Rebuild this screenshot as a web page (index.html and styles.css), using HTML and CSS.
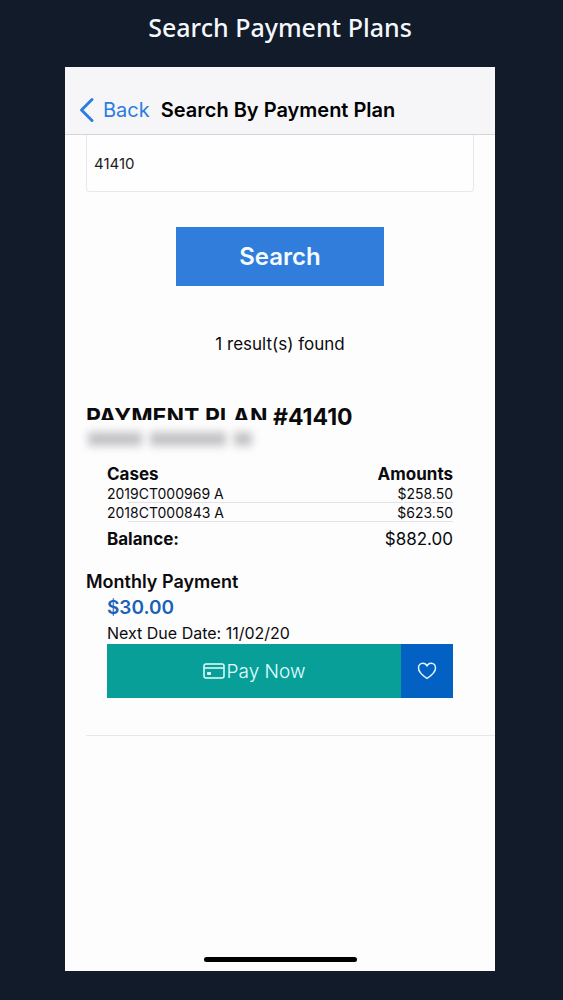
FILE: index.html
```html
<!DOCTYPE html>
<html lang="en">
  <head>
    <meta charset="utf-8">
    <meta name="viewport" content="width=device-width, initial-scale=1">
    <title>Search Payment Plans</title>
    <link rel="stylesheet" href="styles.css">
  </head>
  <body>
    <h1 class="caption">Search Payment Plans</h1>
    <main class="phone">
      <header class="navbar">
        <a class="back" href="#">
          <svg class="chevron" viewBox="0 0 16 26" aria-hidden="true"><path d="M13 2.500 2.500 13 13 23.500"/></svg>
          Back
        </a>
        <h2 class="navbar-title">Search By Payment Plan</h2>
      </header>
      <form class="search">
        <input class="input" type="text" id="plan" name="plan" value="41410" aria-label="Payment plan number">
        <button class="search-button" type="button">Search</button>
      </form>
      <p class="results">1 result(s) found</p>

      <section class="plan">
        <h3 class="plan-title">PAYMENT PLAN #41410</h3>
        <!-- payer name is masked -->
        <div class="masked">
          <span class="mask mask-last"></span>
          <span class="mask mask-first"></span>
          <span class="mask mask-suffix"></span>
        </div>
        <table class="cases">
          <thead>
            <tr><th>Cases</th><th>Amounts</th></tr>
          </thead>
          <tbody>
            <tr><td>2019CT000969 A</td><td>$258.50</td></tr>
            <tr><td>2018CT000843 A</td><td>$623.50</td></tr>
          </tbody>
          <tfoot>
            <tr><th>Balance:</th><td>$882.00</td></tr>
          </tfoot>
        </table>
        <h4 class="monthly">Monthly Payment</h4>
        <div class="payment">
          <p class="amount">$30.00</p>
          <p class="due">Next Due Date: 11/02/20</p>
          <div class="actions">
            <button class="pay" type="button">
              <svg class="card-icon" viewBox="0 0 22 16" aria-hidden="true">
                <rect x="1" y="1" width="20" height="14" rx="2"/>
                <path d="M1 5h20"/>
                <rect class="chip" x="4" y="9" width="4" height="3" rx="1"/>
              </svg>
              Pay Now
            </button>
            <button class="favorite" type="button" aria-label="Add to favorites">
              <svg class="heart-icon" viewBox="0 0 20 18" aria-hidden="true">
                <path d="M10 16.500C7 14.500 1.500 10.500 1.500 6 1.500 3.200 3.400 1.300 5.800 1.300 7.600 1.300 9.200 2.300 10 4 10.800 2.300 12.400 1.300 14.200 1.300 16.600 1.300 18.500 3.200 18.500 6 18.500 10.500 13 14.500 10 16.500Z"/>
              </svg>
            </button>
          </div>
        </div>
      </section>
      <div class="home-bar"></div>
    </main>
  </body>
</html>
```
FILE: styles.css
```css
* {
box-sizing: border-box;
}

body {
display: flex;
flex-direction: column;
min-height: 100vh;
margin: 0;
background-color: #111b29;
color: #0b0b0d;
font-family: Inter, "Liberation Sans", sans-serif;
}

h1, h2, h3, h4, p {
margin: 0;
}

button {
border: none;
padding: 0;
font-family: inherit;
cursor: pointer;
}

svg {
fill: none;
stroke: currentColor;
}

.caption {
padding: 10px 3px 23px 0;
color: #f4f8fc;
font-family: "Noto Sans", sans-serif;
font-size: 25px;
font-weight: 500;
line-height: 34px;
text-align: center;
}

.phone {
display: flex;
flex: 1;
flex-direction: column;
margin: 0 68px 29px 65px;
background-color: #fefdfe;
}

.navbar {
display: flex;
align-items: center;
gap: 11px;
height: 68px;
padding: 18px 14px 0;
border-bottom: 1px solid #d5d5d7;
background-color: #f6f6f8;
}

.back {
display: flex;
align-items: center;
gap: 8px;
color: #2b7de0;
font-size: 20px;
text-decoration: none;
}

.chevron {
width: 16px;
height: 26px;
stroke-width: 3;
stroke-linecap: round;
stroke-linejoin: round;
}

.navbar-title {
color: #000;
font-size: 20px;
font-weight: 600;
}

.search {
display: flex;
flex-direction: column;
align-items: center;
gap: 35px;
padding: 0 21px;
}

.input {
width: 100%;
height: 57px;
padding: 0 7px;
border: 1px solid #e8e8ea;
border-top: none;
border-radius: 0 0 4px 4px;
background-color: #fefefe;
color: #1c1c1e;
font-family: inherit;
font-size: 15px;
}

.search-button {
width: 208px;
height: 59px;
background-color: #307ddc;
color: #f4fbff;
font-size: 24px;
font-weight: 600;
}

.results {
margin-top: 48px;
font-size: 17px;
line-height: 20px;
text-align: center;
}

.plan {
margin: 48px 0 0 21px;
padding-bottom: 37px;
border-bottom: 1px solid #e8e8ec;
}

.plan-title {
font-size: 23px;
font-weight: 700;
line-height: 30px;
}

/* the mask runs over the lower part of the title */
.masked {
position: relative;
display: flex;
gap: 8px;
width: 182px;
height: 40px;
margin-top: -12px;
padding: 12px 0 14px 2px;
background-color: #fefdfe;
}

.mask {
background-color: #c2c2c4;
filter: blur(4px);
}

.mask-last {
width: 54px;
}

.mask-first {
width: 76px;
}

.mask-suffix {
width: 18px;
}

.cases {
width: calc(100% - 63px);
margin: 5px 42px 0 21px;
border-collapse: collapse;
font-size: 14px;
line-height: 19px;
}

.cases th, .cases td {
padding: 0;
text-align: left;
}

.cases th:last-child, .cases td:last-child {
text-align: right;
}

.cases th {
font-size: 17px;
font-weight: 700;
}

.cases tbody tr {
background: linear-gradient(#e3e3e6, #e3e3e6) right bottom / calc(100% - 21px) 1px no-repeat;
}

.cases tfoot th, .cases tfoot td {
padding: 8px 0;
font-size: 17px;
}

.monthly {
margin-top: 12px;
font-size: 18px;
font-weight: 600;
line-height: 25px;
}

.payment {
margin: 0 42px 0 21px;
}

.amount {
color: #1a62b8;
font-size: 19px;
font-weight: 600;
line-height: 28px;
}

.due {
font-size: 16px;
line-height: 22px;
}

.actions {
display: flex;
height: 54px;
}

.pay {
display: flex;
flex: 1;
align-items: center;
justify-content: center;
gap: 2px;
background-color: #089f98;
color: #e2ffff;
font-size: 19px;
font-weight: 300;
}

.card-icon {
width: 22px;
height: 16px;
stroke-width: 1.5;
}

.chip {
fill: currentColor;
stroke: none;
}

.favorite {
display: flex;
align-items: center;
justify-content: center;
width: 52px;
background-color: #0361c3;
color: #e2f6ff;
}

.heart-icon {
width: 20px;
height: 18px;
stroke-width: 1.5;
stroke-linejoin: round;
}

.home-bar {
width: 153px;
height: 5px;
margin: auto auto 9px;
border-radius: 3px;
background-color: #000;
}
```
